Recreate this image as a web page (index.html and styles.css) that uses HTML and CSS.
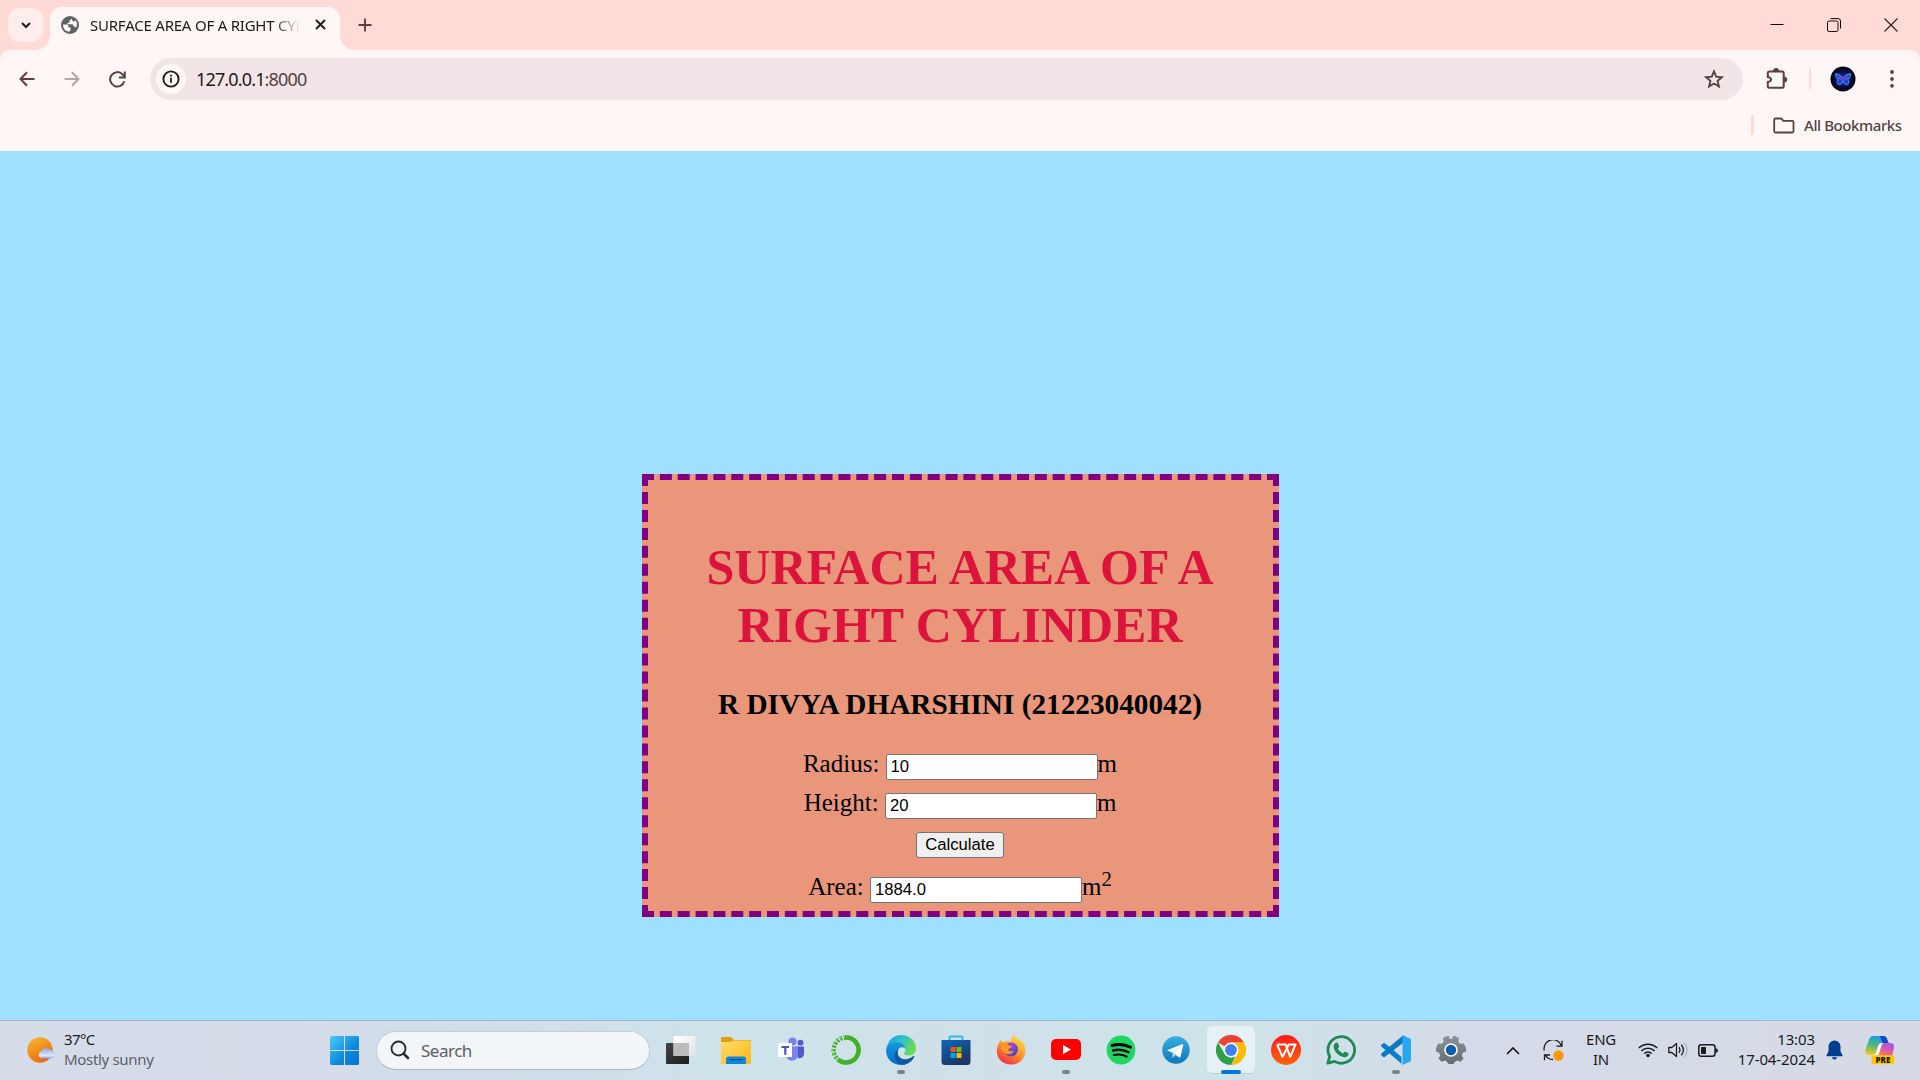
FILE: index.html
```html
<!DOCTYPE html>
<html lang="en">
<head>
<meta charset="utf-8">
<title>SURFACE AREA OF A RIGHT CYLINDER</title>
<link rel="stylesheet" href="styles.css">
</head>
<body>
<header class="browser">
  <div class="tabstrip">
    <button class="tab-search" aria-label="Search tabs"><svg width="10" height="7" viewBox="0 0 10 7"><path d="M1 1l4 4 4-4" fill="none" stroke="#231917" stroke-width="2"/></svg></button>
    <div class="tab">
      <svg class="globe" width="18" height="18" viewBox="0 0 18 18"><circle cx="9" cy="9" r="9" fill="#5f6368"/><path d="M2 8.500h3.500c1.600 0 2 .8 2 2v1h2v2.200c0 1.300-1 2-2.200 1.900C4.200 15.200 2 12.300 2 8.500zM10.500 2c0 1.800-.6 2.300-2 2.300v1.500c0 1-.6 1.200-2 1.200v1.300h4.500c1.400 0 1.600 1.200 1.600 2.300 1.300 0 1.900.3 2.300 1.500 1.600-2.900 1.300-5.800-.1-7.500-.7 1-3 1.200-3.300.1z" fill="#fff7f6"/></svg>
      <span class="tab-title">SURFACE AREA OF A RIGHT CYLINDER</span>
      <svg class="tab-close" width="11" height="11" viewBox="0 0 11 11"><path d="M1 1l9 9M10 1l-9 9" stroke="#231917" stroke-width="1.900"/></svg>
    </div>
    <svg class="new-tab" width="14" height="14" viewBox="0 0 14 14"><path d="M7 .5v13M.5 7h13" stroke="#5d403e" stroke-width="1.900"/></svg>
    <div class="window-buttons">
      <svg width="14" height="14" viewBox="0 0 14 14"><path d="M.5 6.500h13" stroke="#000"/></svg>
      <svg width="14" height="14" viewBox="0 0 14 14"><rect x=".5" y="3" width="10.500" height="10.500" rx="1.500" fill="none" stroke="#1a1010"/><path d="M3.500.6h7.500a2.500 2.500 0 0 1 2.500 2.500v7.400" fill="none" stroke="#000"/></svg>
      <svg width="14" height="14" viewBox="0 0 14 14"><path d="M.5.5l13 13M13.500.5l-13 13" stroke="#2a1c1b" stroke-width="1.100"/></svg>
    </div>
  </div>
  <div class="toolbar">
    <nav class="nav">
      <svg width="16" height="16" viewBox="0 0 16 16"><path d="M15.500 8H2M8 1.200L1.500 8 8 14.800" fill="none" stroke="#5d403e" stroke-width="2"/></svg>
      <svg width="16" height="16" viewBox="0 0 16 16"><path d="M.5 8H14M8 1.200L14.500 8 8 14.800" fill="none" stroke="#b5a5a4" stroke-width="2"/></svg>
      <svg width="17" height="17" viewBox="0 0 17 17"><path d="M15.300 10.200A7.200 7.200 0 1 1 13.600 3.400L15.500 5.500M15.800.5v6H10" fill="none" stroke="#5d403e" stroke-width="2"/></svg>
    </nav>
    <div class="omnibox">
      <span class="site-info"><svg width="18" height="18" viewBox="0 0 18 18"><circle cx="9" cy="9" r="7.600" fill="none" stroke="#231917" stroke-width="1.900"/><path d="M9 7.800v5M9 4.700v1.900" stroke="#231917" stroke-width="1.800"/></svg></span>
      <span class="url">127.0.0.1<span class="port">:8000</span></span>
      <svg class="star" width="20" height="20" viewBox="0 0 20 20"><path d="M10 2.400l2.200 5.300 5.700.5-4.300 3.700 1.300 5.600L10 14.500l-4.900 3 1.300-5.600L2.100 8.200l5.700-.5z" fill="none" stroke="#534341" stroke-width="1.900"/></svg>
    </div>
    <svg class="puzzle" width="22" height="22" viewBox="0 0 22 22"><path d="M3.500 3.500h12.700q1.500 0 1.500 1.500v13.200q0 1.500-1.500 1.500H3.300q-1.500 0-1.500-1.500v-4.100c4.300-.6 4.300-4.500 0-5.100V5q0-1.500 1.700-1.500z" fill="none" stroke="#5d403e" stroke-width="2"/><path d="M7.500 3a2.600 2.600 0 0 1 5.200 0zM18.200 9a2.600 2.600 0 0 1 0 5.200z" fill="#5d403e" stroke="#5d403e"/></svg>
    <span class="divider"></span>
    <svg class="avatar" width="26" height="26" viewBox="0 0 26 26"><defs><radialGradient id="av"><stop offset="0" stop-color="#401a9c"/><stop offset=".55" stop-color="#10104f"/><stop offset="1" stop-color="#02020d"/></radialGradient></defs><circle cx="13" cy="13" r="12.500" fill="url(#av)"/><path d="M12.500 12C10 8.500 7 8 5.500 8c.3 3 1 4.500 2.700 5.500-1.700 2-1 4.500 1 5 1.800.4 3-2 3.300-3.500h1c.3 1.500 1.500 3.900 3.300 3.500 2-.5 2.700-3 1-5 1.700-1 2.400-2.500 2.700-5.500-1.500 0-4.500.5-7 4z" fill="#3a2fc4" stroke="#128fe8" stroke-width="1.300"/><path d="M8 11l4 3M18 11l-4 3" stroke="#b13bd6" stroke-width="1.300"/></svg>
    <svg class="menu-dots" width="4" height="18" viewBox="0 0 4 18"><g fill="#5d403e"><circle cx="2" cy="2" r="1.900"/><circle cx="2" cy="9" r="1.900"/><circle cx="2" cy="15.800" r="1.900"/></g></svg>
  </div>
  <div class="bookmarks">
    <span class="divider"></span>
    <svg width="22" height="17" viewBox="0 0 22 17"><path d="M2.500 1.500h5.800l2 2.400h9q1.200 0 1.200 1.200v9q0 1.400-1.200 1.400H2.500q-1.300 0-1.300-1.400V2.900q0-1.400 1.300-1.400z" fill="none" stroke="#534341" stroke-width="1.800"/></svg>
    <span class="bm-label">All Bookmarks</span>
  </div>
</header>

<main class="page">
  <section class="box">
    <h1>SURFACE AREA OF A RIGHT CYLINDER</h1>
    <h3>R DIVYA DHARSHINI (21223040042)</h3>
    <form class="form">
      <div class="row"><label for="radius">Radius:</label><input id="radius" type="text" value="10"><span>m</span></div>
      <div class="row"><label for="height">Height:</label><input id="height" type="text" value="20"><span>m</span></div>
      <div class="row row-button"><button class="calc" type="button">Calculate</button></div>
      <div class="row row-area"><label for="area">Area:</label><input id="area" type="text" value="1884.0"><span>m<sup>2</sup></span></div>
    </form>
  </section>
</main>

<footer class="taskbar">
  <div class="weather">
    <svg width="29" height="27" viewBox="0 0 29 27"><defs><linearGradient id="sun" x1="0" y1="0" x2=".5" y2="1"><stop offset="0" stop-color="#f3bd32"/><stop offset="1" stop-color="#f0690c"/></linearGradient><linearGradient id="cl" x1="0" y1="0" x2="0" y2="1"><stop offset="0" stop-color="#86a9ee"/><stop offset=".75" stop-color="#dce9ff"/><stop offset="1" stop-color="#7fa5ec"/></linearGradient></defs><circle cx="13" cy="13" r="12.700" fill="url(#sun)"/><path d="M14 21.300a3.700 3.700 0 0 1 .3-7 5.300 5.300 0 0 1 9.500-.8 4 4 0 0 1 1 7.800z" fill="url(#cl)"/></svg>
    <div class="weather-text"><span class="temp">37°C</span><span class="sky">Mostly sunny</span></div>
  </div>
  <svg class="start" width="29" height="29" viewBox="0 0 29 29"><defs><linearGradient id="win" x1="0" y1="0" x2="1" y2="1"><stop offset="0" stop-color="#4ccbfb"/><stop offset=".6" stop-color="#0c87dd"/><stop offset="1" stop-color="#0574cf"/></linearGradient></defs><path d="M1 0h13v14H0V1zM15 0h13l1 1v13H15zM0 15h14v14H1l-1-1zM15 15h14v13l-1 1H15z" fill="url(#win)"/></svg>
  <div class="search">
    <svg width="20" height="20" viewBox="0 0 20 20"><circle cx="8.500" cy="8.500" r="7" fill="none" stroke="#2b2b2b" stroke-width="1.900"/><path d="M13.500 13.500l4.500 4.500" stroke="#2b2b2b" stroke-width="2.500" stroke-linecap="round"/></svg>
    <span>Search</span>
  </div>
  <div class="apps">
    <div class="app"><svg width="30" height="30" viewBox="0 0 30 30"><defs><linearGradient id="tv" x2="1" y2="1"><stop stop-color="#444"/><stop offset="1" stop-color="#1d1d1d"/></linearGradient><linearGradient id="tw" x2="1" y2="1"><stop stop-color="#fff"/><stop offset="1" stop-color="#e0e4e6"/></linearGradient></defs><rect y="8" width="23" height="21" rx="1" fill="url(#tv)"/><rect x="7.500" y="1" width="22" height="20" rx="1" fill="url(#tw)"/><path d="M7.500 8H23v13H7.500z" fill="#bcbcbc"/></svg></div>
    <div class="app"><svg width="30" height="30" viewBox="0 0 30 30"><defs><linearGradient id="fo" x2="1" y2="1"><stop stop-color="#ffdc70"/><stop offset="1" stop-color="#fdb813"/></linearGradient></defs><path d="M0 3q0-1 1-1h9l3 3h16q1 0 1 1v8H0z" fill="#dfa00b"/><path d="M0 7h9l3-1.500h17.500l.5.500v22q0 1-1 1H1q-1 0-1-1z" fill="url(#fo)"/><path d="M5 29v-5q0-2.500 2.500-2.500h15q2.500 0 2.500 2.500v5z" fill="#1186d4"/><path d="M9 24.700h12" stroke="#05528f" stroke-width="1.200" stroke-linecap="round"/></svg></div>
    <div class="app"><svg width="30" height="30" viewBox="0 0 30 30"><circle cx="16.500" cy="6.500" r="4" fill="#7b83eb"/><circle cx="24.500" cy="7.700" r="2.900" fill="#5059c9"/><path d="M20 11.500h8v7.500a4.500 4.500 0 0 1-6 4z" fill="#5059c9"/><path d="M10 11.500h12v8.500a6 6 0 0 1-11.500 2z" fill="#7b83eb"/><rect x="2" y="8" width="14" height="14" fill="#fff"/><path d="M5.500 11h7.500v2h-2.600v6.700H8.200V13H5.500z" fill="#4b53bc"/></svg></div>
    <div class="app"><svg width="30" height="30" viewBox="0 0 30 30"><path d="M14.500 2.500A12.500 12.500 0 1 1 7 24.500" fill="none" stroke="#43b02a" stroke-width="4.600"/><path d="M15 2.500A12.500 12.500 0 0 0 7 24.500" fill="none" stroke="#43b02a" stroke-width="4.400" stroke-dasharray="2.400 1.300"/><path d="M14 2A13 13 0 0 0 6.500 25" fill="none" stroke="#d1e4e7" stroke-width="1" stroke-dasharray="1.500 1.800"/></svg></div>
    <div class="app running"><svg width="30" height="30" viewBox="0 0 30 30"><defs><linearGradient id="e1" x2="1" y2=".4"><stop stop-color="#1f9de6"/><stop offset=".55" stop-color="#2fc3c9"/><stop offset="1" stop-color="#69dc50"/></linearGradient><linearGradient id="e2" x2="0" y2="1"><stop stop-color="#1596df"/><stop offset="1" stop-color="#0a6fc8"/></linearGradient></defs><path d="M1 11.500C3 4 8.500 0 15 0c9 0 15 6.500 15 13 0 5-3.500 7.500-7.500 7.500-3.500 0-5-1.300-4.500-2.500 1-1.200 1.300-2 1.300-3.500 0-3-3-5-7-5-5 0-9 2-11.300 6z" fill="url(#e1)"/><path d="M.2 14C1 9.500 6 7.500 10.500 7.500c5 0 8.500 2.800 8.800 6.500-4-2.500-8 .5-7.800 5 .2 5 3 9 8 10-2.500 1-4.500 1-6.500.8C5 29-.8 22 .2 14z" fill="url(#e2)"/><path d="M12 13.500c-2 7.500 3 12 9.500 10.500 3-.7 5-2.500 6.200-3 .6-.2.800.3.500.9-2 4-6.200 7.600-11.200 7.900-8-1-11-10.300-5-16.300z" fill="#0c59a4"/><path d="M12.300 14.500c1.500-2.800 5-3 6.800-.8.300 1.500 0 2.800-1 4-.8 1.300.5 2.500 3.500 2.800-4 1.500-9.500-.5-9.300-6z" fill="#d1e4ea"/></svg></div>
    <div class="app"><svg width="30" height="30" viewBox="0 0 30 30"><defs><linearGradient id="st" x2=".5" y2="1"><stop stop-color="#0a67bd"/><stop offset="1" stop-color="#1c3661"/></linearGradient></defs><path d="M8.500 6V3q0-1.500 1.500-1.500h10q1.500 0 1.500 1.500v3" fill="none" stroke="#2bbcf2" stroke-width="2"/><path d="M.5 5h29v21.500q0 3.500-3.500 3.500H4Q.5 30 .5 26.500z" fill="url(#st)"/><path d="M9.500 12H14.500v5h-5z" fill="#f25022"/><path d="M15.500 12h5v5h-5z" fill="#7fba00"/><path d="M9.500 18h5v5h-5z" fill="#00a4ef"/><path d="M15.500 18h5v5h-5z" fill="#ffb900"/></svg></div>
    <div class="app"><svg width="30" height="30" viewBox="0 0 30 30"><defs><linearGradient id="f1" x1=".8" y1="0" x2=".2" y2="1"><stop stop-color="#ffe644"/><stop offset=".5" stop-color="#ff9422"/><stop offset="1" stop-color="#f62252"/></linearGradient><radialGradient id="f2" cy=".2"><stop stop-color="#a940e8"/><stop offset="1" stop-color="#5a48d0"/></radialGradient></defs><path d="M4 5c1 1.300 2 2 3.200 2.200C9 6.300 12 5.800 15 6.500c0-2.500 1-4.500 3.500-6.500.5 3 5 4 7.500 7 .4.400.5-.5.400-1C30 12 30 18 28 22c-2.700 5-7.500 7.500-13 7.500C7 29.500.8 24 .8 16c0-3 .7-5.500 2.200-7.500z" fill="url(#f1)"/><circle cx="15" cy="14.500" r="7" fill="url(#f2)"/><path d="M5 9.500c3-2 6-1.500 8 1l3 .5c-.5 2-3 2.500-4 3.500 1 2 4 2 6 1-1 3.500-6 5-9.500 2.500C5.500 16 4.500 12 5 9.500z" fill="#ff9822"/></svg></div>
    <div class="app running"><svg width="30" height="30" viewBox="0 0 30 30"><rect y="4" width="30" height="21" rx="5" fill="red"/><path d="M12 10l8 4.600-8 4.600z" fill="#fff"/></svg></div>
    <div class="app"><svg width="30" height="30" viewBox="0 0 30 30"><circle cx="15" cy="15" r="14.400" fill="#1ed760"/><path d="M6 10.500c6-1.700 13-1.200 18.500 1.800" fill="none" stroke="#000" stroke-width="2.900" stroke-linecap="round"/><path d="M7 15.500c5.500-1.500 11-.8 15.700 1.700" fill="none" stroke="#000" stroke-width="2.400" stroke-linecap="round"/><path d="M7.800 20c4.500-1 9-.6 13 1.600" fill="none" stroke="#000" stroke-width="2" stroke-linecap="round"/></svg></div>
    <div class="app"><svg width="30" height="30" viewBox="0 0 30 30"><defs><linearGradient id="tg" x2="0" y2="1"><stop stop-color="#37aee2"/><stop offset="1" stop-color="#0e79b8"/></linearGradient></defs><circle cx="15" cy="15" r="13.700" fill="url(#tg)"/><path d="M6 15.200L21 9.200c.8-.3 1.300.1 1.100 1l-2.600 11.500c-.2.800-.8 1-1.500.6l-6-4.200z" fill="#fff"/><path d="M12 18l-.4 4.300 3-2.500zM12 17.500l7-6" fill="#c5dff0" stroke="#9ccbe5" stroke-width=".7"/></svg></div>
    <div class="app active"><svg width="30" height="30" viewBox="0 0 30 30"><path d="M15 15L2 7.500A15 15 0 0 1 28 7.500H15z" fill="#ea4335"/><path d="M15 7.500h13A15 15 0 0 1 15 30l6.500-11.200z" fill="#fbbc05"/><path d="M2 7.500l6.500 11.200 6.500 3.800 4.300-1L15 30A15 15 0 0 1 2 7.500z" fill="#2c9f48"/><circle cx="15" cy="15" r="7.500" fill="#fff"/><circle cx="15" cy="15" r="5.900" fill="#3f7fee"/></svg></div>
    <div class="app"><svg width="30" height="30" viewBox="0 0 30 30"><defs><linearGradient id="wp" x2="0" y2="1"><stop stop-color="#ff1a1a"/><stop offset="1" stop-color="#ff6408"/></linearGradient></defs><circle cx="15" cy="15" r="15" fill="url(#wp)"/><path d="M6 9.500h9M6 9.500l5.500 12.300 4.500-8.500 3.200 8.500L24.500 9.500h-6.800L15.500 14M6 9.500h8.500l2 4.500" fill="none" stroke="#fff" stroke-width="2" stroke-linejoin="round"/></svg></div>
    <div class="app"><svg width="30" height="30" viewBox="0 0 30 30"><path d="M1.800 28.200l1.900-6.700A13.300 13.300 0 1 1 8.500 26.400z" fill="none" stroke="#1f8a55" stroke-width="2.800" stroke-linejoin="round"/><path d="M10 7.500l1.600.2 1.700 3.700-1.500 2.200c1.200 2.400 2.500 3.500 5 4.800l2-2 3.700 1.800c.4 2.700-2.200 4.200-4.200 4C13 21.500 8 16.500 7.600 11.700 7.500 10 8.800 8 10 7.500z" fill="#1f8a55"/></svg></div>
    <div class="app running"><svg width="30" height="30" viewBox="0 0 30 30"><path d="M0 10l3-2.300 5.500 4 12 10.300V29l1.500 1L.3 11.500z" fill="#0c7fcb"/><path d="M0 20l3 2.500L22 8V0.500L.3 18.500z" fill="#0f78be"/><path d="M21.500 0l7.500 3.500q1 .5 1 1.500v20q0 1-1 1.500L21.500 30z" fill="#27a7f2"/></svg></div>
    <div class="app"><svg width="30" height="30" viewBox="0 0 30 30"><defs><linearGradient id="ge" x2="0" y2="1"><stop stop-color="#8b9298"/><stop offset="1" stop-color="#666d73"/></linearGradient></defs><path d="M11 1h2l.8 3h2.400l.8-3h2l4 2-.6 3.700 1.800 2 3.500-.2L30 13v3.500l-3.200 1.300-1 2.600 1.700 3-3 3.300-3.300-1.200-2.200 1.200L17.500 29h-5l-1.500-2.300-2.200-1.200-3.300 1.200-3-3.300 1.700-3-1-2.600L0 16.500V13l2.300-4.500 3.500.2 1.800-2L7 3z" fill="url(#ge)"/><circle cx="15" cy="15" r="6.800" fill="#fff"/><circle cx="15" cy="15" r="5.200" fill="#0d5cae"/></svg></div>
  </div>
  <div class="tray">
    <span class="cell c-up"><svg width="14" height="9" viewBox="0 0 14 9"><path d="M1 8l6-6 6 6" fill="none" stroke="#1b1b1b" stroke-width="1.700"/></svg></span>
    <span class="cell c-sync"><svg width="21" height="21" viewBox="0 0 21 21"><path d="M1.200 10.500A9 9 0 0 1 18.500 5.700M19 .8v5.400h-5.500M10 19.500A9 9 0 0 1 2.500 15.500M1.500 20.200v-5.200h5.500" fill="none" stroke="#1b1b1b" stroke-width="1.300"/><circle cx="15.500" cy="15.500" r="5.200" fill="#ff9800"/></svg></span>
    <span class="cell c-lang"><span>ENG</span><span>IN</span></span>
    <span class="cell c-wifi"><svg width="20" height="16" viewBox="0 0 20 16"><g fill="none" stroke="#1b1b1b" stroke-width="1.500"><path d="M.8 6a13 13 0 0 1 18.400 0M3.500 8.900a9.200 9.200 0 0 1 13 0M6.300 11.600a5.200 5.200 0 0 1 7.400 0"/></g><circle cx="10" cy="13.500" r="1.800" fill="#1b1b1b"/></svg></span>
    <span class="cell c-vol"><svg width="20" height="16" viewBox="0 0 20 16"><path d="M.8 5.500h3L8.500 1.500v13L3.800 10.500h-3z" fill="none" stroke="#1b1b1b" stroke-width="1.300" stroke-linejoin="round"/><path d="M10.800 5.300a3.800 3.800 0 0 1 0 5.400M13.200 2.800a7.300 7.300 0 0 1 0 10.400" fill="none" stroke="#1b1b1b" stroke-width="1.300"/><path d="M16 .8a10 10 0 0 1 0 14.400" fill="none" stroke="#b1b4bd" stroke-width="1.300"/></svg></span>
    <span class="cell c-bat"><svg width="20" height="13" viewBox="0 0 20 13"><rect x=".8" y=".8" width="16.200" height="11.400" rx="2.500" fill="none" stroke="#1b1b1b" stroke-width="1.500"/><rect x="3" y="3" width="5" height="7" rx=".8" fill="#1b1b1b"/><path d="M17.500 4q2.500.5 2.500 2.500t-2.500 2.500z" fill="#1b1b1b"/></svg></span>
    <span class="cell c-clock"><span>13:03</span><span>17-04-2024</span></span>
    <span class="cell c-bell"><svg width="17" height="20" viewBox="0 0 17 20"><path d="M8.500.5a6 6 0 0 1 6 6v5l2 3.500v1.200H.5V15l2-3.500v-5a6 6 0 0 1 6-6zM6 17.200h5a2.500 2.300 0 0 1-5 0z" fill="#003e92"/></svg></span>
    <span class="cell c-copilot"><svg width="30" height="30" viewBox="0 0 30 30"><defs><linearGradient id="c1" x1=".5" x2=".3" y2="1"><stop stop-color="#159ce8"/><stop offset=".5" stop-color="#54b578"/><stop offset="1" stop-color="#f3c91b"/></linearGradient><linearGradient id="c2" x1=".7" x2=".3" y2="1"><stop stop-color="#a058ee"/><stop offset=".5" stop-color="#df59a8"/><stop offset="1" stop-color="#ff8050"/></linearGradient></defs><path d="M8 1h10q3 0 4 3l1.500 4H18q-4 0-5 4l-1.700 5Q10.200 20 7.500 20H4Q-.8 20 .5 14.500L4 5Q5 1 8 1z" fill="url(#c1)"/><path d="M14.500 1H18q3 0 4 3l1.500 4h-6l-1.500-4q-.5-2-1.500-3z" fill="#1548c7"/><path d="M18 8h7q5 0 4 5l-2 8H11q2-1 3-5l1-5q1-3 3-3z" fill="url(#c2)"/><path d="M18.500 8H17q-3 0-4 3.500L11.300 17q-.7 2.500-3.300 3.500h5.500l3-10q.6-2 2-2.500z" fill="#f6f7fb"/><rect x="6.500" y="20.300" width="23" height="9" rx="2.500" fill="#ffc700"/><text class="pre" x="18" y="27.800" text-anchor="middle">PRE</text></svg></span>
  </div>
</footer>
</body>
</html>
```
FILE: styles.css
```css
* { box-sizing: border-box; }
body {
  margin: 0;
  width: 1920px;
  height: 1080px;
  overflow: hidden;
  display: flex;
  flex-direction: column;
  font-family: "Noto Sans", "Open Sans", sans-serif;
}
svg { display: block; flex: none; }
button { font: inherit; }

/* Browser chrome */
.browser { height: 151px; flex: none; background: #ffdad7; }
.tabstrip { height: 50px; display: flex; align-items: center; padding-left: 8px; }
.tab-search {
  width: 35px; height: 34px; border: 0; padding: 0; border-radius: 12px;
  background: #ffedeb; display: flex; align-items: center; justify-content: center;
}
.tab {
  position: relative; align-self: flex-end; width: 290px; height: 43px; margin-left: 7px;
  padding: 0 14px 8px 11px; display: flex; align-items: center;
  background: #fff7f6; border-radius: 12px 12px 0 0;
}
.tab::before, .tab::after {
  content: ""; position: absolute; bottom: 0; width: 14px; height: 14px;
}
.tab::before { left: -14px; background: radial-gradient(circle at 0 0, transparent 13.500px, #fff7f6 14px); }
.tab::after { right: -14px; background: radial-gradient(circle at 100% 0, transparent 13.500px, #fff7f6 14px); }
.tab-title {
  margin-left: 11px; width: 209px; overflow: hidden; white-space: nowrap;
  font-size: 15px; line-height: 20px; letter-spacing: -0.220px; color: #231917;
  -webkit-mask-image: linear-gradient(90deg, #000 183px, transparent 211px);
  mask-image: linear-gradient(90deg, #000 183px, transparent 211px);
}
.tab-close { margin-left: auto; }
.new-tab { margin-left: 18px; }
.window-buttons { margin-left: auto; padding-right: 22px; display: flex; gap: 43px; }

.toolbar {
  height: 58px; display: flex; align-items: center; background: #fff7f6;
  border-radius: 10px 10px 0 0; padding-right: 26px;
}
.nav { width: 150px; padding-left: 19px; display: flex; align-items: center; gap: 29px; }
.omnibox {
  width: 1593px; height: 42px; border-radius: 21px; background: #f2e5e7;
  display: flex; align-items: center; padding: 0 19px 0 6px;
}
.site-info {
  width: 30px; height: 30px; border-radius: 50%; background: #fff7f6;
  display: flex; align-items: center; justify-content: center;
}
.url { margin-left: 10px; font-size: 18px; line-height: 24px; letter-spacing: -0.850px; color: #231917; }
.port { color: #534341; }
.star { margin-left: auto; }
.puzzle { margin-left: 23px; }
.divider { width: 2px; height: 20px; background: #ffdad7; }
.toolbar .divider { margin-left: 21px; }
.avatar { margin-left: 19px; }
.menu-dots { margin-left: auto; }
.bookmarks {
  height: 43px; display: flex; align-items: center; justify-content: flex-end;
  background: #fff7f6; padding: 0 18px 9px 0;
}
.bookmarks .divider { width: 3px; margin-right: 19px; }
.bm-label { width: 98px; margin-left: 9px; font-size: 15px; font-weight: 500; line-height: 20px; letter-spacing: -0.420px; color: #534341; white-space: nowrap; }

/* Web page */
.page {
  flex: 1; background: #9fdfff; display: flex; justify-content: center; align-items: flex-start;
  padding-top: 323px; font-family: "Liberation Serif", "Times New Roman", serif;
}
.box {
  width: 637px; height: 443px; border: 6px dashed purple; background: #e9967a;
  color: #000; font-size: 25px; text-align: center; padding-top: 58px;
}
.box h1 { margin: 0; padding: 0 37px; font-size: 50px; line-height: 58px; color: crimson; }
.box h3 { margin: 33px 0 0; font-size: 29.250px; line-height: 34px; }
.form { padding-top: 28px; }
.row {
  display: flex; justify-content: center; align-items: baseline;
  height: 39px; line-height: 29px;
}
.row label { margin-right: 6.250px; }
.row input {
  width: 212px; height: 26px; padding: 1px 3px 1px 4px; margin: 0; border: 1px solid #767676;
  border-radius: 2px; background: #fff; color: #000;
  font: 16.667px "Liberation Sans", Arial, sans-serif;
}
.row-button { height: 45px; padding-top: 5px; }
.calc {
  width: 88px; height: 26px; padding: 0; border: 1px solid #767676; border-radius: 3px;
  background: #efefef; color: #000; font: 16.667px "Liberation Sans", Arial, sans-serif;
}
.row sup { font-size: 20.800px; line-height: 0; }

/* Taskbar */
.taskbar {
  height: 60px; flex: none; display: flex; align-items: center; border-top: 1px solid #a9b3c6;
  background: linear-gradient(90deg, #d6dbe8 0, #d3dde9 400px, #cde3ea 770px, #d1e0e9 960px, #cde4e9 1210px, #d5dbe8 1480px, #d6dae7 100%);
  color: #1b1b1b; font-size: 15px; padding-bottom: 1px;
}
.weather { width: 330px; display: flex; align-items: center; padding-left: 27px; }
.weather-text { margin-left: 8px; padding-bottom: 3px; display: flex; flex-direction: column; line-height: 20px; }
.temp { letter-spacing: -0.600px; }
.sky { color: #5b6068; letter-spacing: -0.320px; }
.search {
  width: 274px; height: 39px; margin-left: 17px; padding-left: 13px;
  display: flex; align-items: center; gap: 11px; background: #f2f6f9;
  border: 1px solid #c3ced9; border-bottom-color: #aab6c3; border-radius: 20px;
  font-size: 17px; color: #5b6065; letter-spacing: -0.500px;
}
.apps { display: flex; margin-left: 3px; }
.app { width: 55px; height: 48px; display: flex; align-items: center; justify-content: center; position: relative; }
.active { width: 48px; margin: 0 3.500px; background: #e6f1f5; border-radius: 5px; border-bottom: 1px solid #bfcdd4; }
.running::after, .active::after {
  content: ""; position: absolute; bottom: 0; left: 50%; width: 8px; height: 4px;
  margin-left: -4px; border-radius: 2px; background: #7b8389;
}
.active::after { width: 20px; margin-left: -10px; bottom: -1px; background: #0078d4; }
.tray { display: flex; align-items: center; height: 100%; margin-left: 8px; }
.cell { display: flex; align-items: center; justify-content: center; flex: none; line-height: 20px; }
.c-up { width: 54px; }
.c-sync { width: 26px; }
.c-lang { width: 70px; flex-direction: column; letter-spacing: -0.300px; padding-bottom: 2px; }
.c-wifi { width: 24px; }
.c-vol { width: 36px; }
.c-bat { width: 24px; }
.c-clock { width: 95px; flex-direction: column; align-items: flex-end; letter-spacing: -0.100px; padding-bottom: 3px; }
.c-bell { width: 39px; }
.c-copilot { width: 51px; }
.pre { font: 800 8px "Open Sans", sans-serif; fill: #241b00; }
```
